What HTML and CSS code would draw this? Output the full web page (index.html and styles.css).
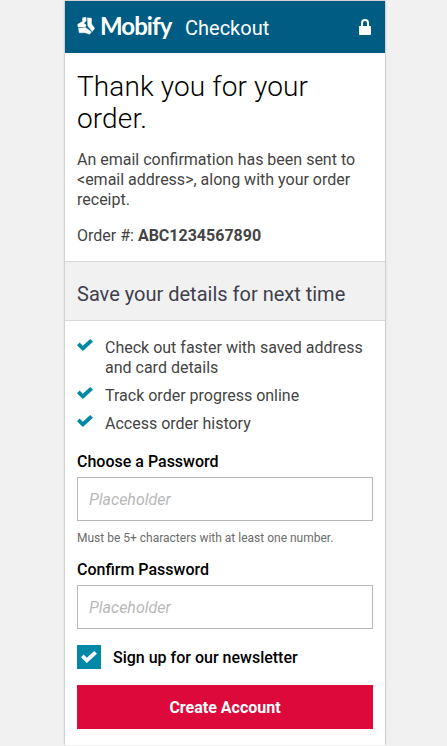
FILE: index.html
```html
<!DOCTYPE html>
<html lang="en">
<head>
<meta charset="utf-8">
<title>Checkout</title>
<link rel="stylesheet" href="styles.css">
</head>
<body>
<main class="card">
  <header class="header">
    <svg class="logo" width="18" height="18" viewBox="0 0 18 18" aria-hidden="true">
      <path d="M5.600.8 9 .2 9.200 4 6.800 6.300 9.200 8 8.200 10H1L.7 7.200 5.400 4.600z"/>
      <path d="M10.400.8 14.500 1.300 14.500 6.800 17.700 11.400 15.200 14.500 10.800 9z"/>
      <path d="M1.400 11.300 8.600 10.600 14.400 14.900 12.700 17.300 8 15.700 2.300 15.800z"/>
    </svg>
    <span class="brand">Mobify</span>
    <span class="header-title">Checkout</span>
    <svg class="lock" width="12" height="16" viewBox="0 0 12 16" aria-hidden="true">
      <path fill-rule="evenodd" d="M2 7V4a4 4 0 0 1 8 0v3h1.300q.7 0 .7.7v7.600q0 .7-.7.7H.7q-.7 0-.7-.7V7.700q0-.7.7-.7zM4 7h4V4a2 2 0 0 0-4 0z"/>
    </svg>
  </header>

  <section class="confirmation">
    <h1>Thank you for your order.</h1>
    <p>An email confirmation has been sent to &lt;email address&gt;, along with your order receipt.</p>
    <p>Order #: <strong>ABC1234567890</strong></p>
  </section>

  <h2 class="section-title">Save your details for next time</h2>

  <form class="account">
    <ul class="benefits">
      <li><svg class="check" width="16" height="12" viewBox="0 0 16 12"><path d="M0 6.300 2.600 3.500 5.800 6.700 13.200 0 16 2.700 5.800 12z"/></svg><span>Check out faster with saved address and card details</span></li>
      <li><svg class="check" width="16" height="12" viewBox="0 0 16 12"><path d="M0 6.300 2.600 3.500 5.800 6.700 13.200 0 16 2.700 5.800 12z"/></svg><span>Track order progress online</span></li>
      <li><svg class="check" width="16" height="12" viewBox="0 0 16 12"><path d="M0 6.300 2.600 3.500 5.800 6.700 13.200 0 16 2.700 5.800 12z"/></svg><span>Access order history</span></li>
    </ul>
    <label class="label" for="password">Choose a Password</label>
    <input class="field" id="password" type="password" placeholder="Placeholder">
    <p class="hint">Must be 5+ characters with at least one number.</p>
    <label class="label" for="confirm">Confirm Password</label>
    <input class="field" id="confirm" type="password" placeholder="Placeholder">
    <div class="newsletter">
      <span class="checkbox"><svg width="16" height="12" viewBox="0 0 16 12"><path d="M0 6.300 2.600 3.500 5.800 6.700 13.200 0 16 2.700 5.800 12z"/></svg></span>
      <span class="newsletter-text">Sign up for our newsletter</span>
    </div>
    <button class="submit" type="button">Create Account</button>
  </form>
</main>
</body>
</html>
```

FILE: styles.css
```css
* {
  box-sizing: border-box;
}

body {
  margin: 0;
  padding-top: 1px;
  background: #f1f1f1;
  color: #444;
  font: 16px/20px Roboto, sans-serif;
  overflow: hidden;
}

.card {
  width: 320px;
  height: 744px;
  margin: 0 0 0 65px;
  background: #fff;
  box-shadow: 0 0 0 1px rgba(0, 0, 0, .06), 0 0 3px rgba(0, 0, 0, .2);
}

.header {
  display: flex;
  align-items: center;
  height: 52px;
  padding: 0 14px 0 12px;
  background: #005c83;
  color: #fff;
}

.header svg {
  fill: currentColor;
}

.logo {
  margin-top: -3px;
  stroke: currentColor;
  stroke-linejoin: round;
  stroke-width: .4;
}

.brand {
  width: 72px;
  margin: -2px 0 0 5px;
  font: 700 24px/28px Lato, sans-serif;
  letter-spacing: -.95px;
}

.header-title {
  margin: 2px 0 0 13px;
  font-size: 20px;
  line-height: 24px;
}

.lock {
  margin-left: auto;
}

.confirmation {
  padding: 18px 12px 15px;
}

h1 {
  margin: 0 0 15px;
  color: #000;
  font-size: 28px;
  font-weight: 300;
  letter-spacing: .12px;
  line-height: 32px;
}

p {
  margin: 0 0 16px;
}

.confirmation p:last-child {
  margin-bottom: 0;
}

.section-title {
  height: 60px;
  margin: 0;
  padding: 20px 12px 0;
  border: solid #d8d8d8;
  border-width: 1px 0;
  background: #f1f1f1;
  color: #3f3f4c;
  font-size: 20px;
  font-weight: 400;
  line-height: 24px;
}

.account {
  padding: 17px 12px 16px;
}

.benefits {
  display: grid;
  gap: 8px;
  margin: 0 0 18px;
  padding: 0;
  list-style: none;
}

.benefits li {
  display: flex;
  gap: 12px;
}

.check {
  flex: none;
  margin-top: 1px;
  fill: #0288a7;
}

.label {
  display: block;
  margin-bottom: 5px;
  color: #000;
  font-weight: 500;
}

.field {
  display: block;
  width: 100%;
  height: 44px;
  padding: 0 11px;
  border: 1px solid #b8b8b8;
  border-radius: 0;
  background: #fff;
  font: inherit;
}

.field::placeholder {
  color: #b8b8b8;
  font-style: italic;
}

.hint {
  margin: 9px 0 14px;
  color: #6c6c6c;
  font-size: 12px;
  line-height: 16px;
}

.newsletter {
  display: flex;
  align-items: center;
  gap: 12px;
  margin: 16px 0;
  color: #000;
  font-weight: 500;
}

.newsletter-text {
  padding-top: 2px;
}

.checkbox {
  display: grid;
  place-items: center;
  width: 24px;
  height: 24px;
  background: #0288a7;
  fill: #fff;
}

.submit {
  display: block;
  width: 100%;
  height: 44px;
  padding: 2px 0 0;
  border: 0;
  background: #dd093b;
  color: #fff;
  font: 700 16px/20px Roboto, sans-serif;
}
```
